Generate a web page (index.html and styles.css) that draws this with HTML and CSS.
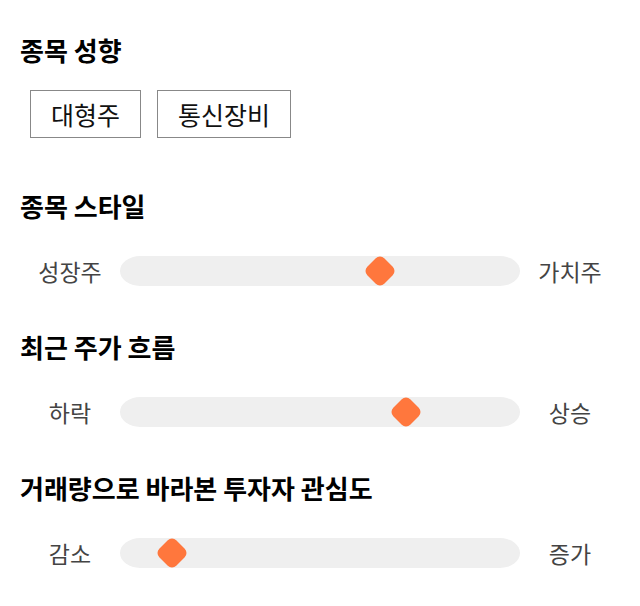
FILE: index.html
```html
<!DOCTYPE html>
<html>
  <head>
    <title>종목 분석</title>
    <link rel="stylesheet" href="styles.css">
  </head>
  <body>
    <div class="page">
      <!-- 종목 성향 -->
      <section class="section tags-section">
        <h2 class="title">종목 성향</h2>
        <div class="tags">
          <span class="tag">대형주</span>
          <span class="tag">통신장비</span>
        </div>
      </section>

      <section class="section">
        <h2 class="title">종목 스타일</h2>
        <div class="slider-row">
          <span class="label">성장주</span>
          <div class="track"><span class="thumb" style="left: 65%"></span></div>
          <span class="label">가치주</span>
        </div>
      </section>

      <section class="section">
        <h2 class="title">최근 주가 흐름</h2>
        <div class="slider-row">
          <span class="label">하락</span>
          <div class="track"><span class="thumb" style="left: 71.5%"></span></div>
          <span class="label">상승</span>
        </div>
      </section>

      <section class="section">
        <h2 class="title">거래량으로 바라본 투자자 관심도</h2>
        <div class="slider-row">
          <span class="label">감소</span>
          <div class="track"><span class="thumb" style="left: 13%"></span></div>
          <span class="label">증가</span>
        </div>
      </section>
    </div>
  </body>
</html>
```

FILE: styles.css
```css
body {
  margin: 0;
  font-family: "Noto Sans CJK KR", "Noto Sans", sans-serif;
  background: #fff;
  color: #111;
}

.page {
  width: 600px;
  padding: 34px 20px 0;
}

.section {
  margin-bottom: 43px;
}

.tags-section {
  margin-bottom: 52px;
}

.title {
  margin: 0;
  font-size: 26px;
  line-height: 32px;
  font-weight: bold;
  color: #000;
}

.tags {
  display: flex;
  gap: 16px;
  margin-top: 24px;
  padding-left: 10px;
}

.tag {
  display: block;
  height: 46px;
  line-height: 46px;
  padding: 0 20px;
  border: 1px solid #888;
  font-size: 25px;
  color: #111;
}

.slider-row {
  display: grid;
  grid-template-columns: 100px 400px 100px;
  align-items: center;
  margin-top: 32px;
}

.label {
  text-align: center;
  font-size: 23px;
  color: #444;
}

.track {
  position: relative;
  height: 30px;
  background: #efefef;
  border-radius: 20px / 15px;
}

.thumb {
  position: absolute;
  top: 3px;
  width: 24px;
  height: 24px;
  margin-left: -12px;
  background: #ff773d;
  border-radius: 6px;
  transform: rotate(45deg);
}
```
